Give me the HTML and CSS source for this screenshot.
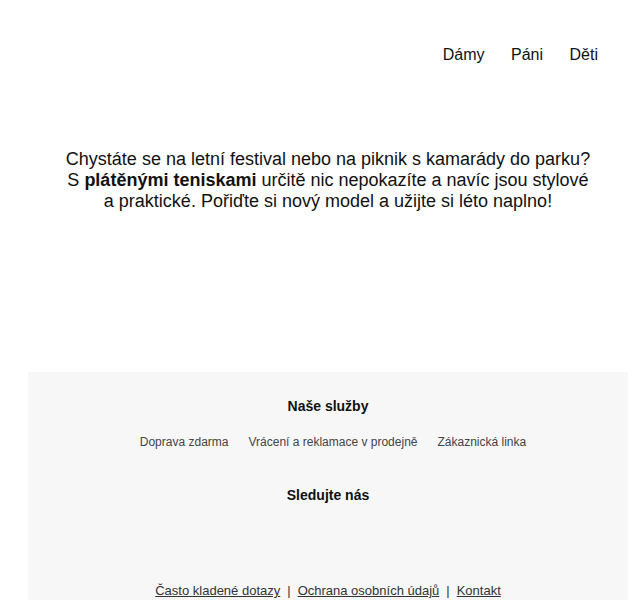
FILE: index.html
```html
<!DOCTYPE html>
<html lang="cs">
<head>
<meta charset="utf-8">
<link rel="stylesheet" href="styles.css">
</head>
<body>
<div class="page">
  <header class="header">
    <nav class="nav">
      <a href="#">Dámy</a>
      <a href="#">Páni</a>
      <a href="#">Děti</a>
    </nav>
  </header>
  <main class="main">
    <p class="intro">Chystáte se na letní festival nebo na piknik s kamarády do parku? S <strong>plátěnými teniskami</strong> určitě nic nepokazíte a navíc jsou stylové a praktické. Pořiďte si nový model a užijte si léto naplno!</p>
  </main>
  <footer class="footer">
    <h3 class="footer-title">Naše služby</h3>
    <ul class="services">
      <li>Doprava zdarma</li>
      <li>Vrácení a reklamace v prodejně</li>
      <li>Zákaznická linka</li>
    </ul>
    <h3 class="footer-title follow">Sledujte nás</h3>
    <div class="social"></div>
    <div class="legal">
      <a href="#">Často kladené dotazy</a><span class="sep">|</span><a href="#">Ochrana osobních údajů</a><span class="sep">|</span><a href="#">Kontakt</a>
    </div>
  </footer>
</div>
</body>
</html>
```
FILE: styles.css
```css
html, body {
  margin: 0;
  padding: 0;
  background: #fff;
}
body {
  font-family: "Liberation Sans", Arial, sans-serif;
  color: #111;
}
.page {
  width: 600px;
  margin-left: 28px;
}
.header {
  display: flex;
  justify-content: flex-end;
  padding: 46px 30px 0 0;
  height: 18px;
}
.nav {
  display: flex;
  gap: 26.5px;
}
.nav a {
  color: #111;
  text-decoration: none;
  font-size: 16px;
  line-height: 18px;
}
.main {
  padding-top: 85px;
  height: 308px;
  box-sizing: border-box;
}
.intro {
  margin: 0 auto;
  width: 532px;
  text-align: center;
  font-size: 18px;
  line-height: 21px;
}
.intro strong {
  font-weight: bold;
}
.footer {
  background: #f7f7f7;
  padding: 26px 0 4px;
  text-align: center;
}
.footer-title {
  margin: 0;
  font-size: 14px;
  line-height: 16px;
  font-weight: bold;
}
.services {
  list-style: none;
  margin: 21px 0 0;
  padding: 0 0 0 10px;
  display: flex;
  justify-content: center;
  gap: 20px;
  font-size: 12px;
  line-height: 14px;
  color: #444;
}
.follow {
  margin-top: 38px;
}
.social {
  height: 80px;
}
.legal {
  font-size: 13px;
  line-height: 15px;
  color: #333;
}
.legal a {
  color: #333;
  text-decoration: underline;
}
.sep {
  margin: 0 7px;
}
```
